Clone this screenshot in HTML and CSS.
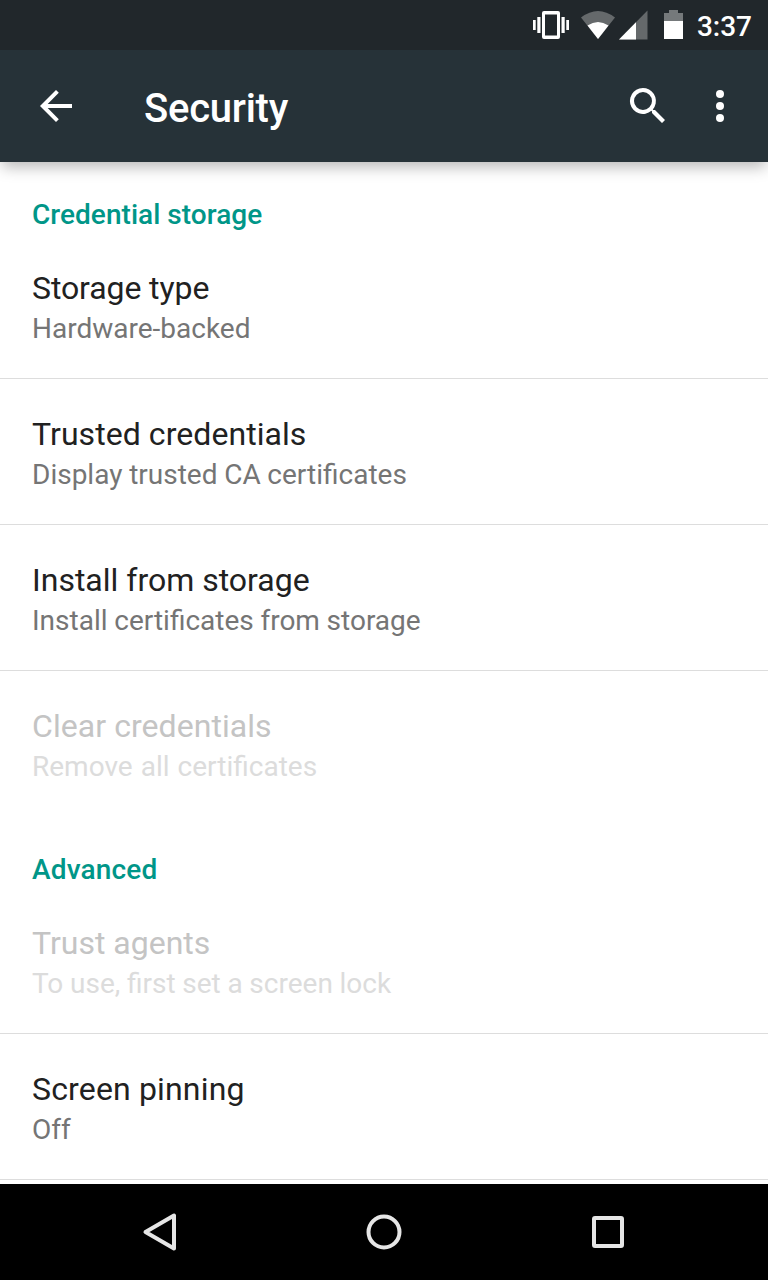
FILE: index.html
```html
<!DOCTYPE html>
<html lang="en">
<head>
<meta charset="utf-8">
<title>Security</title>
<link rel="stylesheet" href="styles.css">
</head>
<body>
<div class="screen">
  <div class="status">
    <svg class="status-icons" width="160" height="50" viewBox="528 0 160 50">
      <g fill="#fff">
        <path fill-rule="evenodd" d="M544 11h14a2 2 0 0 1 2 2v24a2 2 0 0 1-2 2h-14a2 2 0 0 1-2-2V13a2 2 0 0 1 2-2zm1 3.500v21h12v-21z"/>
        <path d="M533 20h2.700v10H533zM537.300 17h3.200v16h-3.200zM561.500 17h3.200v16h-3.200zM566.300 20h2.700v10h-2.700z"/>
        <path fill="#65696b" d="M598 39L581 17.500Q598 4.500 615 17.500z"/>
        <path d="M598 39L587.500 25.500Q598 18.500 608.500 25.500z"/>
        <path fill="#65696b" d="M619 39.500L647.500 10.500v29z"/>
        <path d="M619 39.500L636 22.200v17.300z"/>
        <path fill="#75797b" d="M664 21v-8h5v-3h9v3h5v8z"/>
        <path d="M664 21h19v18h-19z"/>
      </g>
    </svg>
    <span class="clock">3:37</span>
  </div>
  <header class="bar">
    <svg class="back" width="48" height="48" viewBox="0 0 48 48"><path d="M40 22H15.700L26.800 10.800 24 8 8 24l16 16 2.800-2.800L15.700 26H40z" fill="#fff"/></svg>
    <h1 class="title">Security</h1>
    <svg class="search" width="48" height="48" viewBox="0 0 24 24"><path fill="#fff" d="M15.500 14h-.8l-.3-.3A6.500 6.500 0 1 0 13.700 14.400l.3.300v.8l5 5 1.500-1.500zm-6 0a4.500 4.500 0 1 1 0-9 4.500 4.500 0 0 1 0 9z"/></svg>
    <svg class="more" width="48" height="48" viewBox="0 0 48 48"><g fill="#fff"><circle cx="24" cy="12" r="4"/><circle cx="24" cy="24" r="4"/><circle cx="24" cy="36" r="4"/></g></svg>
  </header>
  <main class="list">
    <h2 class="heading">Credential storage</h2>
    <div class="item"><div class="name tight">Storage type</div><div class="summary">Hardware-backed</div></div>
    <div class="item"><div class="name loose">Trusted credentials</div><div class="summary snug">Display trusted CA certificates</div></div>
    <div class="item"><div class="name">Install from storage</div><div class="summary snug">Install certificates from storage</div></div>
    <div class="item disabled last"><div class="name loose">Clear credentials</div><div class="summary wide">Remove all certificates</div></div>
    <h2 class="heading wider">Advanced</h2>
    <div class="item disabled"><div class="name">Trust agents</div><div class="summary snug">To use, first set a screen lock</div></div>
    <div class="item"><div class="name wider">Screen pinning</div><div class="summary">Off</div></div>
  </main>
  <nav class="nav">
    <svg width="48" height="48" viewBox="0 0 48 48"><path d="M9.500 24L38 7.500v33z"/></svg>
    <svg width="48" height="48" viewBox="0 0 48 48"><circle cx="24" cy="24" r="15.500"/></svg>
    <svg width="48" height="48" viewBox="0 0 48 48"><rect x="10" y="10" width="28" height="28" rx="1"/></svg>
  </nav>
</div>
</body>
</html>
```
FILE: styles.css
```css
body { margin: 0; font-family: Roboto, sans-serif; background: #fff; }
.screen { width: 768px; height: 1280px; display: flex; flex-direction: column; overflow: hidden; }
.status { flex: none; height: 50px; background: #21272b; display: flex; justify-content: flex-end; color: #fff; z-index: 2; }
.clock { width: 64px; margin-right: 16px; text-align: right; font-size: 28px; font-weight: 500; line-height: 53px; }
.bar { flex: none; height: 112px; box-sizing: border-box; padding: 0 24px 0 32px; background: #263238; display: flex; align-items: center; color: #fff; z-index: 1; box-shadow: 0 7px 14px -2px rgba(0,0,0,.28); }
.title { margin: 5px 0 0 64px; flex: 1; font-size: 40px; font-weight: 500; letter-spacing: -.25px; }
.search { margin-right: 24px; }
.list { flex: 1; min-height: 0; overflow: hidden; }
.heading { margin: 0; height: 71px; box-sizing: border-box; padding: 16px 32px 0; line-height: 73px; font-size: 28px; font-weight: 500; letter-spacing: .04px; color: #009688; }
.item { height: 146px; box-sizing: border-box; padding: 36px 32px 0; border-bottom: 1px solid #ddd; }
.name { font-size: 32px; line-height: 38px; color: #212121; }
.summary { font-size: 28px; line-height: 44px; color: #757575; }
.disabled .name { color: #c4c4c4; }
.disabled .summary { color: #dcdcdc; }
.last { border-bottom-color: transparent; }
.tight { letter-spacing: -.1px; }
.snug { word-spacing: -.25px; }
.loose { letter-spacing: .06px; }
.wide { word-spacing: 1.1px; }
.wider { letter-spacing: .16px; }
.nav { flex: none; height: 96px; background: #000; display: flex; align-items: center; justify-content: center; gap: 176px; }
.nav svg { fill: none; stroke: #e6e6e6; stroke-width: 4; stroke-linejoin: round; }
```
